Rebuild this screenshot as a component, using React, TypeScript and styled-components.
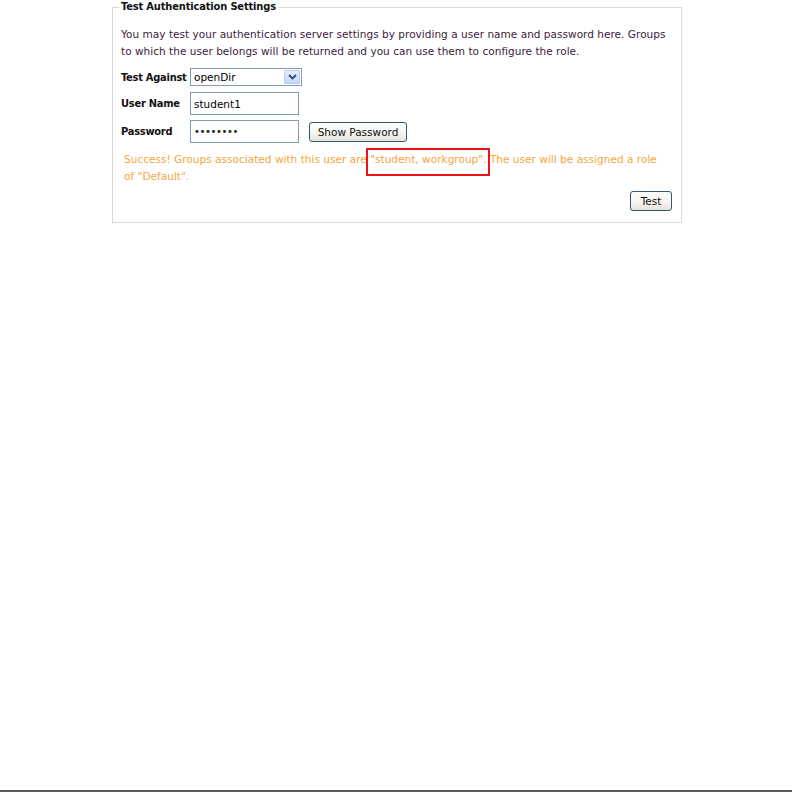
import React from "react";
import styled, { createGlobalStyle } from "styled-components";

const Global = createGlobalStyle`
  html, body { margin: 0; padding: 0; background: #fff; }
  body { font-family: "DejaVu Sans", sans-serif; font-size: 10.5px; }
`;

const Page = styled.div`
  height: 792px;
  display: flex;
  flex-direction: column;
`;

const Main = styled.div`
  flex: 1;
  padding-left: 112px;
`;

const BottomEdge = styled.div`
  height: 2px;
  background: #5c5c5c;
`;

const Fieldset = styled.fieldset`
  margin: 0;
  padding: 0 9px 11px 8px;
  border: 1px solid #d9d9d9;
  box-sizing: border-box;
  width: 570px;
`;

const Legend = styled.legend`
  font-family: "DejaVu Sans Condensed", "DejaVu Sans", sans-serif;
  font-size: 11px;
  font-weight: bold;
  letter-spacing: -0.15px;
  color: #111;
  line-height: 14px;
  padding: 0 2px;
  margin-left: -2px;
`;

const Intro = styled.p`
  margin: 12px 0 0 0;
  line-height: 17px;
  color: #3a1c3c;
  letter-spacing: 0.03px;
  white-space: nowrap;
`;

const FormGrid = styled.div`
  display: grid;
  grid-template-columns: 69px auto;
  row-gap: 6px;
  align-items: center;
  margin-top: 8px;
`;

const Label = styled.div<{ $lift?: number }>`
  font-family: "DejaVu Sans Condensed", "DejaVu Sans", sans-serif;
  font-size: 11px;
  font-weight: bold;
  letter-spacing: -0.25px;
  color: #111;
  margin-top: ${(p) => (p.$lift ? -p.$lift : 0)}px;
`;

const FieldRow = styled.div<{ $lift?: number }>`
  display: flex;
  align-items: center;
  gap: 10px;
  margin-top: ${(p) => (p.$lift ? -p.$lift : 0)}px;
`;

const TextBox = styled.div`
  width: 109px;
  height: 23px;
  box-sizing: border-box;
  border: 1px solid #7f9db9;
  background: #fff;
  padding: 0 3px;
  display: flex;
  align-items: center;
  color: #000;
`;

const Dots = styled.span`
  letter-spacing: -0.4px;
  font-size: 10px;
  color: #222;
`;

const Select = styled.div`
  width: 112px;
  height: 18px;
  box-sizing: border-box;
  border: 1px solid #7f9db9;
  background: #fff;
  display: flex;
  align-items: stretch;
  color: #000;
`;

const SelectText = styled.div`
  flex: 1;
  padding-left: 3px;
  line-height: 16px;
`;

const ArrowBtn = styled.div`
  width: 16px;
  margin: 1px;
  box-sizing: border-box;
  border: 1px solid #b9cbf2;
  border-radius: 1px;
  background: linear-gradient(#e6edfd, #c6d5f7);
  display: flex;
  align-items: center;
  justify-content: center;
`;

const Button = styled.button<{ $w: number }>`
  width: ${(p) => p.$w}px;
  height: 20px;
  box-sizing: border-box;
  border: 1px solid #38557a;
  border-radius: 3px;
  background: linear-gradient(#ffffff, #f4f3ee 60%, #e4e2d8);
  font-family: inherit;
  font-size: 10.5px;
  color: #111;
  padding: 0;
  cursor: default;
`;

const Success = styled.p`
  margin: 8px 0 0 3px;
  line-height: 17px;
  color: #f6a53f;
  letter-spacing: 0.03px;
  white-space: nowrap;
`;

const Highlight = styled.span`
  position: relative;
  &::after {
    content: "";
    position: absolute;
    left: -4px;
    right: -3px;
    top: -5px;
    bottom: -11px;
    border: 2px solid #e8141a;
  }
`;

const Actions = styled.div`
  display: flex;
  justify-content: flex-end;
  margin-top: 6px;
`;

export default function App() {
  return (
    <Page>
      <Global />
      <Main>
        <Fieldset>
          <Legend>Test Authentication Settings</Legend>
          <Intro>
            You may test your authentication server settings by providing a user name and password here. Groups
            <br />
            to which the user belongs will be returned and you can use them to configure the role.
          </Intro>
          <FormGrid>
            <Label>Test Against</Label>
            <FieldRow>
              <Select>
                <SelectText>openDir</SelectText>
                <ArrowBtn>
                  <svg width="9" height="6" viewBox="0 0 9 6">
                    <path d="M1 1 L4.5 4.5 L8 1" fill="none" stroke="#2c4a8c" strokeWidth="1.8" />
                  </svg>
                </ArrowBtn>
              </Select>
            </FieldRow>
            <Label>User Name</Label>
            <FieldRow>
              <TextBox>student1</TextBox>
            </FieldRow>
            <Label $lift={1}>Password</Label>
            <FieldRow $lift={1}>
              <TextBox>
                <Dots>••••••••</Dots>
              </TextBox>
              <Button $w={98}>Show Password</Button>
            </FieldRow>
          </FormGrid>
          <Success>
            Success! Groups associated with this user are <Highlight>"student, workgroup".</Highlight> The user will be assigned a role
            <br />
            of "Default".
          </Success>
          <Actions>
            <Button $w={42}>Test</Button>
          </Actions>
        </Fieldset>
      </Main>
      <BottomEdge />
    </Page>
  );
}
